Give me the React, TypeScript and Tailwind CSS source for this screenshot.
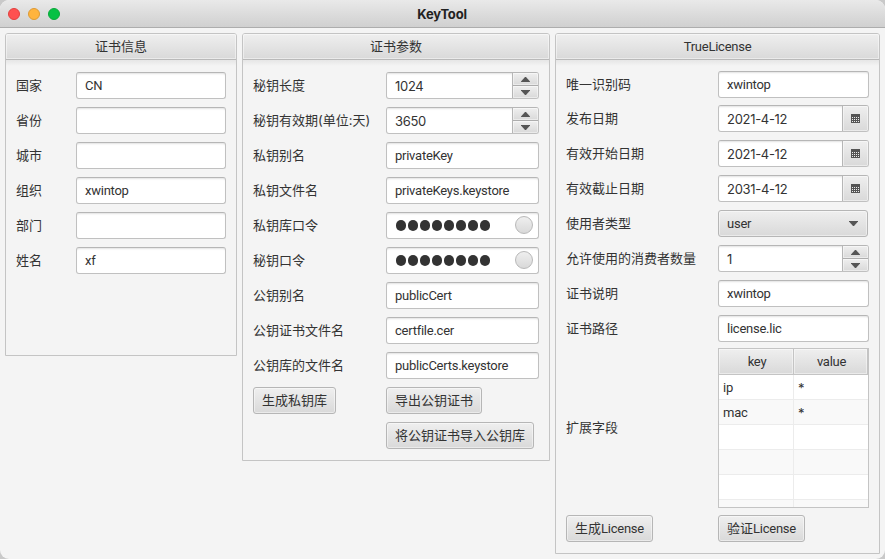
import type { ReactNode } from 'react';

const BORDER = 'border border-[#c0c0c0] border-t-[#b6b6b6]';
const GRAD = 'bg-linear-to-b from-[#efefef] to-[#d9d9d9]';
const INNER = 'shadow-[inset_0_0_0_1px_rgba(255,255,255,0.45)]';

type BoxProps = { children?: ReactNode };

/** Latin runs are set in a slightly tighter face than the CJK labels. */
function Latin({ children }: BoxProps) {
  return <span className="[font-family:Roboto,sans-serif] tracking-[-0.25px]">{children}</span>;
}

/** Numbers and dates. */
function Digits({ children }: BoxProps) {
  return <span className="[font-family:Inter,sans-serif] tracking-[-0.3px]">{children}</span>;
}

function Panel({ title, className, children }: { title: ReactNode; className: string; children: ReactNode }) {
  return (
    <section className={`flex flex-col rounded-t-[3px] border border-[#c4c4c4] ${className}`}>
      <h2
        className={`flex h-[25px] shrink-0 items-center justify-center rounded-t-[2px] ${
          typeof title === 'string' ? 'pb-[2px]' : ''
        } ${GRAD} ${INNER}`}
      >
        {title}
      </h2>
      <div className="h-[7px] shrink-0 border-t border-[#b9b9b9] bg-linear-to-b from-[#e6e6e6] to-[#f4f4f4]" />
      {children}
    </section>
  );
}

function Field({ children }: BoxProps) {
  return (
    <div
      className={`flex h-[27px] w-full items-center rounded-[3px] bg-white pl-2 shadow-[inset_0_2px_2px_-1px_#e2e2e2] ${BORDER}`}
    >
      <Latin>{children}</Latin>
    </div>
  );
}

function Spinner({ children }: BoxProps) {
  return (
    <div className={`flex h-[27px] w-full overflow-hidden rounded-[3px] bg-white ${BORDER}`}>
      <div className="flex flex-1 items-center pl-2 shadow-[inset_0_2px_2px_-1px_#e2e2e2]">
        <Digits>{children}</Digits>
      </div>
      <div className="flex w-[26px] flex-col border-l border-[#b6b6b6]">
        <div className={`flex h-[12px] items-center justify-center ${GRAD} ${INNER}`}>
          <svg width="9" height="5" viewBox="0 0 9 5">
            <path d="M0 5V4.4L4 0h1l4 4.4V5z" fill="#555" />
          </svg>
        </div>
        <div className={`flex h-[13px] items-center justify-center border-t border-[#adadad] ${GRAD} ${INNER}`}>
          <svg width="9" height="5" viewBox="0 0 9 5">
            <path d="M0 0v.6L4 5h1L9 .6V0z" fill="#555" />
          </svg>
        </div>
      </div>
    </div>
  );
}

function DateField({ children }: BoxProps) {
  return (
    <div className={`flex h-[27px] w-full overflow-hidden rounded-[3px] bg-white ${BORDER}`}>
      <div className="flex flex-1 items-center pl-2 shadow-[inset_0_2px_2px_-1px_#e2e2e2]">
        <Digits>{children}</Digits>
      </div>
      <div className={`flex w-[26px] items-center justify-center border-l border-[#b6b6b6] ${GRAD} ${INNER}`}>
        <svg width="9" height="9" viewBox="0 0 9 9" shapeRendering="crispEdges">
          <path d="M0 0h9v9H0z" fill="#555" />
          <path
            d="M1 3h1v1H1zM3 3h1v1H3zM5 3h1v1H5zM7 3h1v1H7zM1 5h1v1H1zM3 5h1v1H3zM5 5h1v1H5zM7 5h1v1H7zM1 7h1v1H1zM3 7h1v1H3zM5 7h1v1H5zM7 7h1v1H7z"
            fill="#ededed"
          />
        </svg>
      </div>
    </div>
  );
}

function PasswordField() {
  return (
    <div
      className={`flex h-[27px] w-full items-center justify-between rounded-[3px] bg-white pr-[5px] pb-px pl-[9px] shadow-[inset_0_2px_2px_-1px_#e2e2e2] ${BORDER}`}
    >
      <div className="flex gap-[2px]">
        {Array.from({ length: 8 }, (_, i) => (
          <span key={i} className="h-[11px] w-[10px] rounded-full bg-[#333]" />
        ))}
      </div>
      <span className={`size-[18px] rounded-full border border-[#b8b8b8] ${GRAD}`} />
    </div>
  );
}

function Select({ children }: BoxProps) {
  return (
    <div
      className={`flex h-[27px] w-[150px] items-center justify-between rounded-[3px] border border-[#b6b6b6] pr-[9px] pl-2 ${GRAD} ${INNER}`}
    >
      <Latin>{children}</Latin>
      <svg width="9" height="5" viewBox="0 0 9 5">
        <path d="M0 0v.6L4 5h1L9 .6V0z" fill="#555" />
      </svg>
    </div>
  );
}

function Button({ width, children }: { width: string; children: ReactNode }) {
  return (
    <button
      type="button"
      className={`flex h-[27px] items-center justify-center rounded-[3px] border border-[#b6b6b6] pb-[2px] whitespace-nowrap ${width} ${GRAD} ${INNER}`}
    >
      {children}
    </button>
  );
}

function Row({ label, labelWidth, children }: { label: ReactNode; labelWidth: string; children: ReactNode }) {
  return (
    <div className="flex h-[27px] items-center">
      <div className={`shrink-0 whitespace-nowrap ${typeof label === 'string' ? 'pb-[2px]' : ''} ${labelWidth}`}>
        {label}
      </div>
      <div className="min-w-0 flex-1">{children}</div>
    </div>
  );
}

const info = [
  ['国家', 'CN'],
  ['省份', ''],
  ['城市', ''],
  ['组织', 'xwintop'],
  ['部门', ''],
  ['姓名', 'xf'],
];

const tableRows = [
  ['ip', '*'],
  ['mac', '*'],
  ['', ''],
  ['', ''],
  ['', ''],
];

function KeyTable() {
  return (
    <div className="flex h-[160px] flex-col overflow-hidden border border-[#c4c4c4] bg-white">
      <div className="flex h-[26px] shrink-0 border-b border-[#c4c4c4]">
        <div className={`flex w-[75px] items-center justify-center border-r border-[#c4c4c4] pt-px pl-[2px] ${GRAD} ${INNER}`}>
          <Latin>key</Latin>
        </div>
        <div className={`flex flex-1 items-center justify-center border-r border-[#c4c4c4] pt-px pl-[2px] ${GRAD} ${INNER}`}>
          <Latin>value</Latin>
        </div>
      </div>
      {tableRows.map(([key, value], i) => (
        <div key={i} className="flex h-[25px] shrink-0 border-b border-[#ececec] odd:bg-[#f9f9f9]">
          <div className="flex w-[75px] items-center border-r border-[#ececec] pt-px pl-1">
            <Latin>{key}</Latin>
          </div>
          <div className="flex flex-1 items-center pt-px pl-1">
            <Digits>{value}</Digits>
          </div>
        </div>
      ))}
      <div className="flex flex-1 bg-[#f9f9f9]">
        <div className="w-[75px] border-r border-[#ececec]" />
      </div>
    </div>
  );
}

export default function App() {
  return (
    <div className="h-[559px] w-[885px] overflow-hidden bg-[#c9c9c9] [font-family:Inter,'Noto_Sans_CJK_SC',sans-serif] text-[13px] leading-[18px] text-[#333]">
      <div className="flex h-full flex-col overflow-hidden rounded-[9px] bg-[#f4f4f4]">
        <header className="flex h-[28px] shrink-0 items-center border-b border-[#adadad] bg-linear-to-b from-[#e9e9e9] to-[#d0d0d0] px-2">
          <div className="flex w-[60px] gap-2">
            <span className="size-3 rounded-full border border-[#e2403e] bg-[#fe5150]" />
            <span className="size-3 rounded-full border border-[#dd9a35] bg-[#ffb43e]" />
            <span className="size-3 rounded-full border border-[#0ba93a] bg-[#05c144]" />
          </div>
          <h1 className="flex-1 pr-[61px] text-center text-[13px] font-bold tracking-[-0.2px] text-[#222]">
            KeyTool
          </h1>
        </header>

        <main className="flex items-start gap-[5px] px-[5px] pt-[5px]">
          <Panel title="证书信息" className="h-[323px] w-[232px]">
            <div className="flex flex-col gap-2 pt-[6px] pr-[10px] pl-[10px]">
              {info.map(([label, value]) => (
                <Row key={label} label={label} labelWidth="w-[60px]">
                  <Field>{value}</Field>
                </Row>
              ))}
            </div>
          </Panel>

          <Panel title="证书参数" className="h-[428px] w-[308px]">
            <div className="flex flex-col gap-2 pt-[6px] pr-[10px] pl-[10px]">
              <Row label="秘钥长度" labelWidth="w-[133px]">
                <Spinner>1024</Spinner>
              </Row>
              <Row label="秘钥有效期(单位:天)" labelWidth="w-[133px]">
                <Spinner>3650</Spinner>
              </Row>
              <Row label="私钥别名" labelWidth="w-[133px]">
                <Field>privateKey</Field>
              </Row>
              <Row label="私钥文件名" labelWidth="w-[133px]">
                <Field>privateKeys.keystore</Field>
              </Row>
              <Row label="私钥库口令" labelWidth="w-[133px]">
                <PasswordField />
              </Row>
              <Row label="秘钥口令" labelWidth="w-[133px]">
                <PasswordField />
              </Row>
              <Row label="公钥别名" labelWidth="w-[133px]">
                <Field>publicCert</Field>
              </Row>
              <Row label="公钥证书文件名" labelWidth="w-[133px]">
                <Field>certfile.cer</Field>
              </Row>
              <Row label="公钥库的文件名" labelWidth="w-[133px]">
                <Field>publicCerts.keystore</Field>
              </Row>
              <Row label={<Button width="w-[83px]">生成私钥库</Button>} labelWidth="w-[133px]">
                <Button width="w-[96px]">导出公钥证书</Button>
              </Row>
              <Row label="" labelWidth="w-[133px]">
                <Button width="w-[148px]">将公钥证书导入公钥库</Button>
              </Row>
            </div>
          </Panel>

          <Panel title={<Latin>TrueLicense</Latin>} className="h-[521px] w-[325px]">
            <div className="flex flex-col pt-[5px] pr-[10px] pl-[10px]">
              <Row label="唯一识别码" labelWidth="w-[152px]">
                <Field>xwintop</Field>
              </Row>
              <div className="flex flex-col gap-2 pt-[7px]">
                <Row label="发布日期" labelWidth="w-[152px]">
                  <DateField>2021-4-12</DateField>
                </Row>
                <Row label="有效开始日期" labelWidth="w-[152px]">
                  <DateField>2021-4-12</DateField>
                </Row>
                <Row label="有效截止日期" labelWidth="w-[152px]">
                  <DateField>2031-4-12</DateField>
                </Row>
                <Row label="使用者类型" labelWidth="w-[152px]">
                  <Select>user</Select>
                </Row>
                <Row label="允许使用的消费者数量" labelWidth="w-[152px]">
                  <Spinner>1</Spinner>
                </Row>
                <Row label="证书说明" labelWidth="w-[152px]">
                  <Field>xwintop</Field>
                </Row>
                <Row label="证书路径" labelWidth="w-[152px]">
                  <Field>license.lic</Field>
                </Row>
              </div>
              <div className="flex items-center pt-[6px] pb-[7px]">
                <div className="w-[152px] pb-[2px]">扩展字段</div>
                <div className="flex-1">
                  <KeyTable />
                </div>
              </div>
              <Row
                label={
                  <Button width="w-[87px]">
                    生成
                    <span className="pt-[2px]">
                      <Latin>License</Latin>
                    </span>
                  </Button>
                }
                labelWidth="w-[152px]"
              >
                <Button width="w-[87px]">
                  验证
                  <span className="pt-[2px]">
                    <Latin>License</Latin>
                  </span>
                </Button>
              </Row>
            </div>
          </Panel>
        </main>
      </div>
    </div>
  );
}
